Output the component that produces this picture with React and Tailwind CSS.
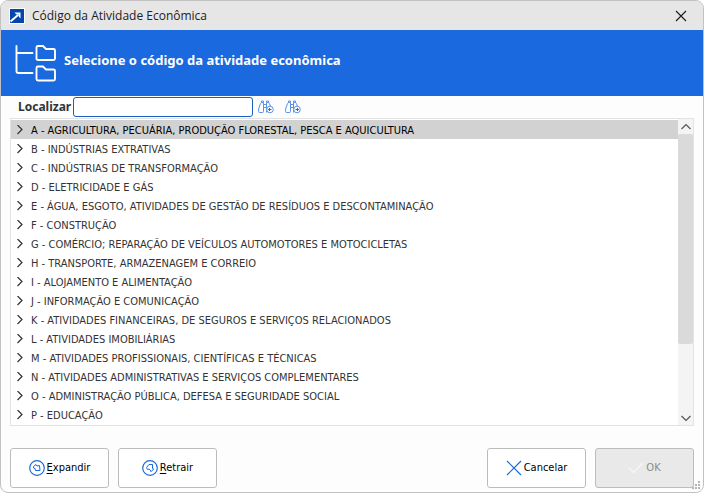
import React, { useState } from "react";

const ACTIVITIES = [
  "A - AGRICULTURA, PECUÁRIA, PRODUÇÃO FLORESTAL, PESCA E AQUICULTURA",
  "B - INDÚSTRIAS EXTRATIVAS",
  "C - INDÚSTRIAS DE TRANSFORMAÇÃO",
  "D - ELETRICIDADE E GÁS",
  "E - ÁGUA, ESGOTO, ATIVIDADES DE GESTÃO DE RESÍDUOS E DESCONTAMINAÇÃO",
  "F - CONSTRUÇÃO",
  "G - COMÉRCIO; REPARAÇÃO DE VEÍCULOS AUTOMOTORES E MOTOCICLETAS",
  "H - TRANSPORTE, ARMAZENAGEM E CORREIO",
  "I - ALOJAMENTO E ALIMENTAÇÃO",
  "J - INFORMAÇÃO E COMUNICAÇÃO",
  "K - ATIVIDADES FINANCEIRAS, DE SEGUROS E SERVIÇOS RELACIONADOS",
  "L - ATIVIDADES IMOBILIÁRIAS",
  "M - ATIVIDADES PROFISSIONAIS, CIENTÍFICAS E TÉCNICAS",
  "N - ATIVIDADES ADMINISTRATIVAS E SERVIÇOS COMPLEMENTARES",
  "O - ADMINISTRAÇÃO PÚBLICA, DEFESA E SEGURIDADE SOCIAL",
  "P - EDUCAÇÃO",
];

function AppIcon() {
  return (
    <svg width="16" height="16" viewBox="0 0 16 16" fill="none">
      <rect width="16" height="16" fill="#fff" />
      <rect x="1" y="1" width="14" height="14" fill="#0645ad" />
      <path d="M1.500 13.500 9.500 6.500" stroke="#fff" strokeWidth="1.9" />
      <path d="M5.500 4.500H11.500V10.500L9.800 8.800V6.200H7.200z" fill="#fff" />
    </svg>
  );
}

function TreeIcon() {
  return (
    <svg width="42" height="38" viewBox="0 0 42 38" fill="none" stroke="#fff" strokeWidth="1.900" strokeLinecap="round" strokeLinejoin="round">
      <path d="M1.500 2v25q0 2 2 2h14M1.500 9h16" />
      <path d="M21.500 15V3.500q0-1.500 1.500-1.500h5l3 3h7.500q1.500 0 1.500 1.500V14.500q0 1.500-1.500 1.500h-15.500q-1.500 0-1.500-1.500z" />
      <path d="M21.500 35V24q0-1.500 1.500-1.500h5l3 3h7.500q1.500 0 1.500 1.500V35q0 1.500-1.500 1.500h-15.500q-1.500 0-1.500-1.500z" />
    </svg>
  );
}

function BinocularsIcon({ previous }) {
  return (
    <svg width="16" height="14" viewBox="0 0 16 14" fill="none" stroke="#5a92e6" strokeWidth="1">
      <path d="M.6 11.500V9L2.500 3.500q.3-1 1.500-1h1.500v9q0 1-1 1H1.500q-.9 0-.9-1zM3.500 2.500V1h2v1.500M10.500 2.500V1h-2v1.500M8.500 7V2.500H10q1.200 0 1.500 1l.9 2.500M5.500 4.500h3M5.500 7.500h3M8.500 7v5.500" />
      <circle cx="12" cy="9.500" r="3.300" fill="#fdfdfd" />
      <path stroke="#1b69df" d={previous ? "M10.500 9.500h3M12 8l-1.500 1.500L12 11" : "M10.500 9.500h3M12 8l1.500 1.500L12 11"} />
    </svg>
  );
}

function ArrowCircle({ collapse }) {
  return (
    <svg width="16" height="16" viewBox="0 0 16 16" fill="none" stroke="#1b69df" strokeLinejoin="round">
      <circle cx="8" cy="8" r="7.300" strokeWidth="1.200" />
      {collapse ? (
        <path d="M7 4.500h3.500v4l1.200.5-2.700 2.700-.7-1.700-1.300-1L5.500 9.500l-1-2z" />
      ) : (
        <path d="M4.500 6.500 7 4.500l1 1.500 2.500-.5.500 5H6.500L6 8.500l-1.500-.5z" />
      )}
    </svg>
  );
}

function Chevron({ className, d }) {
  return (
    <svg className={className} width="10" height="10" viewBox="0 0 10 10" fill="none" stroke="currentColor" strokeWidth="1.2">
      <path d={d} />
    </svg>
  );
}

function DialogButton({ children, ...props }) {
  return (
    <button
      type="button"
      className="flex h-10 w-[99px] items-center justify-center gap-0.5 rounded-[3px] border border-[#bcbcbc] bg-white text-[11px] text-black disabled:bg-[#e9e9e9] disabled:text-[#8b8b8b]"
      {...props}
    >
      {children}
    </button>
  );
}

export default function App() {
  const [search, setSearch] = useState("");
  const [selected, setSelected] = useState(0);

  return (
    <div className="relative flex min-h-screen flex-col overflow-hidden rounded-lg border border-[#c2c2c2] bg-[#fdfdfd] font-['DejaVu_Sans_Condensed','DejaVu_Sans',sans-serif] text-[#333]">
      <header className="flex h-[29px] items-center gap-[7px] bg-[#e6e6e6] pr-4 pl-2">
        <AppIcon />
        <h1 className="flex-1 font-['Open_Sans',sans-serif] text-[12px] text-[#222]">Código da Atividade Econômica</h1>
        <button type="button" aria-label="Fechar">
          <svg width="12" height="12" viewBox="0 0 12 12" stroke="#1a1a1a" strokeWidth="1.1">
            <path d="M1 1l10 10M11 1 1 11" />
          </svg>
        </button>
      </header>

      <div className="flex h-[66px] items-center gap-[7px] bg-[#1a69df] pl-[14px]">
        <TreeIcon />
        <h2 className="pb-1 font-['Noto_Sans',sans-serif] text-[13px] font-bold text-white">Selecione o código da atividade econômica</h2>
      </div>

      <div className="flex h-[22px] items-center pl-[17px]">
        <label htmlFor="search" className="w-[55px] font-['Noto_Sans',sans-serif] text-[12px] font-bold">Localizar</label>
        <input
          id="search"
          value={search}
          onChange={(e) => setSearch(e.target.value)}
          className="h-5 w-[180px] rounded-[3px] border border-[#1c60bd] bg-white px-1 text-[11px] outline-none"
        />
        <button type="button" aria-label="Localizar anterior" className="ml-[5px]">
          <BinocularsIcon previous />
        </button>
        <button type="button" aria-label="Localizar próximo" className="ml-[11px]">
          <BinocularsIcon />
        </button>
      </div>

      <div className="mx-[9px] flex flex-1 border border-[#e3e3e3] bg-white">
        <ul className="min-w-0 flex-1 py-px">
          {ACTIVITIES.map((name, i) => (
            <li key={name}>
              <button
                type="button"
                onClick={() => setSelected(i)}
                className={`flex h-[19px] w-full items-center gap-1.5 pl-1 text-left text-[11px] whitespace-nowrap ${
                  selected === i ? "bg-[#d2d2d2] text-black" : ""
                }`}
              >
                <Chevron className="shrink-0 text-[#333]" d="M2.500 0 7 4.500 2.500 9" />
                <span className="pt-1">{name}</span>
              </button>
            </li>
          ))}
        </ul>
        <div className="flex w-[15px] flex-col items-center bg-[#f4f4f4] text-[#555]">
          <div className="flex h-[15px] items-center">
            <Chevron d="M.5 7 5 2.500 9.500 7" />
          </div>
          <div className="w-full flex-1">
            <div className="h-[76%] rounded-xs bg-[#dadada]" />
          </div>
          <div className="flex h-[15px] items-center">
            <Chevron d="M.5 3 5 7.500 9.500 3" />
          </div>
        </div>
      </div>

      <footer className="flex gap-[9px] px-[9px] pt-[22px] pb-1">
        <DialogButton>
          <ArrowCircle />
          <span><u className="underline-offset-2">E</u>xpandir</span>
        </DialogButton>
        <DialogButton>
          <ArrowCircle collapse />
          <span><u className="underline-offset-2">R</u>etrair</span>
        </DialogButton>
        <div className="flex-1" />
        <DialogButton>
          <svg width="16" height="16" viewBox="0 0 16 16" stroke="#1b69df" strokeWidth="1.2">
            <path d="M1 1l14 14M15 1 1 15" />
          </svg>
          Cancelar
        </DialogButton>
        <DialogButton disabled>
          <svg width="16" height="16" viewBox="0 0 16 16" fill="none" stroke="#f7f7f7" strokeWidth="1.2">
            <path d="M1 8l4.500 4.500L15 3" />
          </svg>
          OK
        </DialogButton>
      </footer>

      <svg className="absolute right-0.5 bottom-0.5" width="9" height="9" viewBox="0 0 9 9" fill="#b5b5b5">
        <path d="M6 0h2v2H6zM3 3h2v2H3zM6 3h2v2H6zM0 6h2v2H0zM3 6h2v2H3zM6 6h2v2H6z" />
      </svg>
    </div>
  );
}
